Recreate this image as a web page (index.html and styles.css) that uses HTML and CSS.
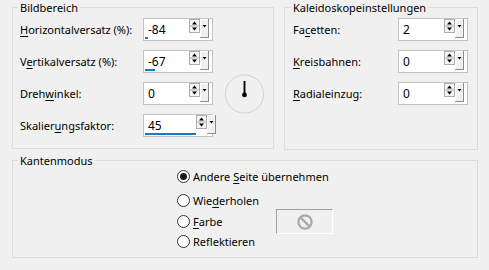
FILE: index.html
```html
<!DOCTYPE html>
<html lang="de">
<head>
    <meta charset="UTF-8">
    <title>Kaleidoskop</title>
    <link rel="stylesheet" href="styles.css">
</head>
<body>
    <svg class="defs">
        <symbol id="spin" viewBox="0 0 21 19">
            <rect x="0.5" y="0.5" width="10" height="13" fill="#f6f6f6" stroke="#acacac"/>
            <line x1="0" y1="7" x2="11" y2="7" stroke="#acacac"/>
            <polygon points="3,5.5 5.5,2.5 8,5.5" fill="#000"/>
            <polygon points="3,8.5 8,8.5 5.5,11.5" fill="#000"/>
            <rect x="11" y="0" width="9" height="19" fill="#f0f0f0"/>
            <line x1="11.5" y1="0" x2="11.5" y2="19" stroke="#fff"/>
            <line x1="11" y1="0.5" x2="20" y2="0.5" stroke="#fff"/>
            <line x1="19.5" y1="0" x2="19.5" y2="19" stroke="#8c8c8c"/>
            <line x1="11" y1="18.5" x2="20" y2="18.5" stroke="#8c8c8c"/>
            <polygon points="13.5,6 17.5,6 15.5,8.5" fill="#000"/>
        </symbol>
    </svg>

    <div class="top">
        <fieldset class="group group-image">
            <legend>Bildbereich</legend>
            <div class="rows rows-image">
                <label><u>H</u>orizontalversatz (%):</label>
                <div class="spinbox">
                    <div class="value"><span>-84</span><div class="bar" style="width:3px"></div></div>
                    <svg class="spin"><use href="#spin"/></svg>
                </div>

                <label>V<u>e</u>rtikalversatz (%):</label>
                <div class="spinbox">
                    <div class="value"><span>-67</span><div class="bar" style="width:10px"></div></div>
                    <svg class="spin"><use href="#spin"/></svg>
                </div>

                <label>Dreh<u>w</u>inkel:</label>
                <div class="spinbox">
                    <div class="value"><span>0</span></div>
                    <svg class="spin"><use href="#spin"/></svg>
                </div>

                <label>Skalier<u>u</u>ngsfaktor:</label>
                <div class="spinbox">
                    <div class="value"><span>45</span><div class="bar" style="width:51px"></div></div>
                    <svg class="spin"><use href="#spin"/></svg>
                </div>

                <div class="dial">
                    <svg width="44" height="44" viewBox="0 0 44 44">
                        <circle cx="22" cy="22" r="20.5" fill="none" stroke="#cdcdcd"/>
                        <line x1="22" y1="8" x2="22" y2="23" stroke="#000" stroke-width="2"/>
                        <circle cx="22" cy="23" r="2.6" fill="#000"/>
                    </svg>
                </div>
            </div>
        </fieldset>

        <fieldset class="group group-kaleido">
            <legend>Kaleidoskopeinstellungen</legend>
            <div class="rows rows-kaleido">
                <label>Fa<u>c</u>etten:</label>
                <div class="spinbox">
                    <div class="value"><span>2</span></div>
                    <svg class="spin"><use href="#spin"/></svg>
                </div>

                <label><u>K</u>reisbahnen:</label>
                <div class="spinbox">
                    <div class="value"><span>0</span></div>
                    <svg class="spin"><use href="#spin"/></svg>
                </div>

                <label><u>R</u>adialeinzug:</label>
                <div class="spinbox">
                    <div class="value"><span>0</span></div>
                    <svg class="spin"><use href="#spin"/></svg>
                </div>
            </div>
        </fieldset>
    </div>

    <fieldset class="group group-edge">
        <legend>Kantenmodus</legend>
        <div class="options">
            <div class="option first">
                <span class="radio checked"></span>
                <span>Andere <u>S</u>eite übernehmen</span>
            </div>
            <div class="option">
                <span class="radio"></span>
                <span>Wie<u>d</u>erholen</span>
            </div>
            <div class="option color-row">
                <div class="color-label">
                    <span class="radio"></span>
                    <span><u>F</u>arbe</span>
                </div>
                <div class="swatch">
                    <svg width="18" height="18" viewBox="0 0 18 18">
                        <circle cx="9" cy="9" r="6.6" fill="none" stroke="#a9a9a9" stroke-width="2.2"/>
                        <line x1="4.6" y1="4.6" x2="13.4" y2="13.4" stroke="#a9a9a9" stroke-width="2.2"/>
                    </svg>
                </div>
            </div>
            <div class="option last">
                <span class="radio"></span>
                <span>Ref<u>l</u>ektieren</span>
            </div>
        </div>
    </fieldset>
</body>
</html>
```

FILE: styles.css
```css
body {
    margin: 0;
    background-color: #f0f0f0;
    color: #000;
    font-family: "Noto Sans", "Open Sans", sans-serif;
    font-size: 11px;
    width: 489px;
    height: 270px;
    overflow: hidden;
}

.defs {
    display: none;
}

u {
    text-decoration: underline;
    text-underline-offset: 2px;
}

.top {
    display: flex;
    gap: 10px;
    padding: 0 11px 0 12px;
}

.group {
    margin: 0;
    padding: 0;
    border: 1px solid #dcdcdc;
    min-width: 0;
    box-sizing: border-box;
}

.group legend {
    padding: 0 2px;
    margin-left: 5px;
    line-height: 15px;
}

.group-image {
    width: 262px;
    height: 149px;
}

.group-kaleido {
    width: 194px;
    height: 150px;
}

.group-kaleido legend {
    margin-left: 6px;
}

.rows {
    display: grid;
    grid-auto-rows: 23px;
    row-gap: 9px;
    align-items: center;
    padding-top: 3px;
}

.rows label {
    grid-column: 1;
}

.rows .spinbox {
    grid-column: 2;
}

.rows-image {
    grid-template-columns: 123px 70px 52px;
    padding-left: 7px;
}

.rows-kaleido {
    grid-template-columns: 105px 70px;
    padding-left: 8px;
}

.dial {
    grid-column: 3;
    grid-row: 2 / span 3;
    align-self: center;
    padding-left: 11px;
    display: flex;
}

.spinbox {
    display: flex;
    height: 23px;
    box-sizing: border-box;
    border: 1px solid #c3c3c3;
    background-color: #fff;
    font-size: 12px;
}

.value {
    flex: 1;
    display: flex;
    flex-direction: column;
    padding-left: 1px;
}

.value span {
    padding: 3px 0 0 3px;
    line-height: 15px;
}

.bar {
    height: 3px;
    margin-top: auto;
    margin-bottom: 1px;
    background-color: #1a78c6;
}

.spin {
    flex-shrink: 0;
    width: 21px;
    height: 19px;
    margin-right: 2px;
}

.group-edge {
    margin: 3px 11px 0 12px;
    width: 466px;
    height: 105px;
}

.options {
    display: flex;
    flex-direction: column;
    padding: 0 0 0 164px;
}

.option {
    display: flex;
    align-items: center;
    height: 17px;
}

.option.first {
    margin-bottom: 7px;
}

.color-row {
    height: 25px;
}

.color-label {
    display: flex;
    align-items: center;
    width: 99px;
}

.option.last {
    margin-top: -1px;
}

.radio {
    flex-shrink: 0;
    width: 11px;
    height: 11px;
    border: 1px solid #333;
    border-radius: 50%;
    background-color: #fff;
    margin-right: 3px;
    display: flex;
    align-items: center;
    justify-content: center;
}

.radio.checked::after {
    content: "";
    width: 7px;
    height: 7px;
    border-radius: 50%;
    background-color: #1b1b1b;
}

.swatch {
    width: 57px;
    height: 25px;
    box-sizing: border-box;
    border-top: 1px solid #a0a0a0;
    border-left: 1px solid #a0a0a0;
    border-right: 1px solid #fff;
    border-bottom: 1px solid #fff;
    display: flex;
    align-items: center;
    justify-content: center;
}
```
